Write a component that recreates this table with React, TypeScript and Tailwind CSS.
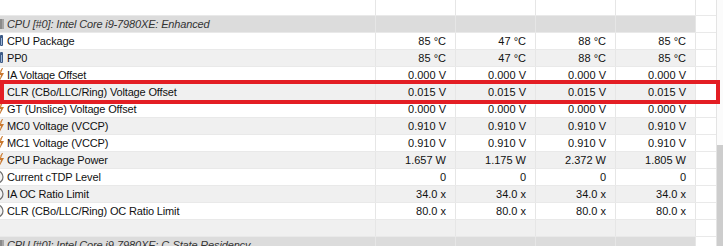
import React from "react";

type Kind = "chip" | "temp" | "volt" | "clock" | "none";

type Row = {
  label: string;
  kind: Kind;
  values?: string[];
  header?: boolean;
};

const rows: Row[] = [
  { label: "CPU [#0]: Intel Core i9-7980XE: Enhanced", kind: "chip", header: true },
  { label: "CPU Package", kind: "temp", values: ["85 °C", "47 °C", "88 °C", "85 °C"] },
  { label: "PP0", kind: "temp", values: ["85 °C", "47 °C", "88 °C", "85 °C"] },
  { label: "IA Voltage Offset", kind: "volt", values: ["0.000 V", "0.000 V", "0.000 V", "0.000 V"] },
  { label: "CLR (CBo/LLC/Ring) Voltage Offset", kind: "volt", values: ["0.015 V", "0.015 V", "0.015 V", "0.015 V"] },
  { label: "GT (Unslice) Voltage Offset", kind: "volt", values: ["0.000 V", "0.000 V", "0.000 V", "0.000 V"] },
  { label: "MC0 Voltage (VCCP)", kind: "volt", values: ["0.910 V", "0.910 V", "0.910 V", "0.910 V"] },
  { label: "MC1 Voltage (VCCP)", kind: "volt", values: ["0.910 V", "0.910 V", "0.910 V", "0.910 V"] },
  { label: "CPU Package Power", kind: "volt", values: ["1.657 W", "1.175 W", "2.372 W", "1.805 W"] },
  { label: "Current cTDP Level", kind: "clock", values: ["0", "0", "0", "0"] },
  { label: "IA OC Ratio Limit", kind: "clock", values: ["34.0 x", "34.0 x", "34.0 x", "34.0 x"] },
  { label: "CLR (CBo/LLC/Ring) OC Ratio Limit", kind: "clock", values: ["80.0 x", "80.0 x", "80.0 x", "80.0 x"] },
  { label: "", kind: "none" },
  { label: "CPU [#0]: Intel Core i9-7980XE: C-State Residency", kind: "chip", header: true },
];

function Icon({ kind }: { kind: Kind }) {
  if (kind === "none") return <span className="w-4 h-4 shrink-0" />;
  return (
    <svg width="16" height="16" viewBox="0 0 16 16" className="shrink-0">
      {kind === "chip" && (
        <g>
          <rect x="3" y="3" width="10" height="10" fill="#8a8a8a" />
          <rect x="5" y="5" width="6" height="6" fill="#c4c4c4" />
          <path d="M1 4h2M1 6h2M1 8h2M1 10h2M1 12h2M13 4h2M13 6h2M13 8h2M13 10h2M13 12h2" stroke="#6f6f6f" strokeWidth="1" />
        </g>
      )}
      {kind === "temp" && (
        <g>
          <rect x="11" y="2" width="3" height="11" rx="1" fill="#3c5a86" />
          <rect x="12" y="5" width="1" height="7" fill="#9db6d8" />
        </g>
      )}
      {kind === "volt" && (
        <g>
          <path d="M13 1 L9 8 L12 8 L10 15 L15 6 L12 6 L14 1 Z" fill="#c9782f" />
          <path d="M12 3 L10 7" stroke="#e9b27a" strokeWidth="1" />
        </g>
      )}
      {kind === "clock" && (
        <g>
          <circle cx="8" cy="8" r="6" fill="#f4f4f4" stroke="#707070" strokeWidth="1.2" />
          <path d="M8 4v4h3" stroke="#9a9a9a" strokeWidth="1" fill="none" />
        </g>
      )}
    </svg>
  );
}

function TableRow({ row, index }: { row: Row; index: number }) {
  const bg = row.header ? "bg-[#dcdcdc]" : index % 2 === 1 ? "bg-white" : "bg-[#f0f0f0]";
  return (
    <div className="flex h-[17px] shrink-0 border-b border-[#e9e9e9] box-border">
      <div className={`${bg} w-[376px] shrink-0 overflow-hidden border-r border-[#e6e6e6] box-border`}>
        <div className="flex items-center h-full ml-[-11px] gap-[2px]">
          <Icon kind={row.kind} />
          <span
            className={`whitespace-nowrap leading-none tracking-[-0.15px] ${row.header ? "italic text-[#333]" : "text-[#111]"}`}
          >
            {row.label}
          </span>
        </div>
      </div>
      {[0, 1, 2, 3].map((c) => (
        <div
          key={c}
          className={`${bg} w-[80px] shrink-0 border-r border-[#e6e6e6] box-border flex items-center justify-end pr-[9px] whitespace-nowrap leading-none text-[#111]`}
        >
          {row.values ? row.values[c] : ""}
        </div>
      ))}
      <div className="flex-1 bg-white" />
    </div>
  );
}

export default function App() {
  return (
    <div
      className="relative w-[723px] h-[246px] overflow-hidden bg-white text-[11px]"
      style={{ fontFamily: '"Liberation Sans", Arial, sans-serif' }}
    >
      <div className="flex h-full">
        <div className="flex-1 flex flex-col">
          <div className="flex h-[16px] shrink-0 border-b border-[#e9e9e9] box-border">
            <div className="w-[376px] shrink-0 border-r border-[#e6e6e6] box-border" />
            <div className="w-[80px] shrink-0 border-r border-[#e6e6e6] box-border" />
            <div className="w-[80px] shrink-0 border-r border-[#e6e6e6] box-border" />
            <div className="w-[80px] shrink-0 border-r border-[#e6e6e6] box-border" />
            <div className="w-[80px] shrink-0 border-r border-[#e6e6e6] box-border" />
            <div className="flex-1" />
          </div>
          {rows.map((r, i) => (
            <TableRow key={i} row={r} index={i} />
          ))}
        </div>
        <div className="w-[7px] shrink-0 border-l border-[#e4e4e4] bg-[#fbfbfb] flex flex-col">
          <div className="h-[145px] shrink-0" />
          <div className="flex-1 bg-[#cdcdcd]" />
        </div>
      </div>
      <div className="absolute left-0 top-[80px] w-[720px] h-[24px] border-[4px] border-[#e31e24]" />
    </div>
  );
}
